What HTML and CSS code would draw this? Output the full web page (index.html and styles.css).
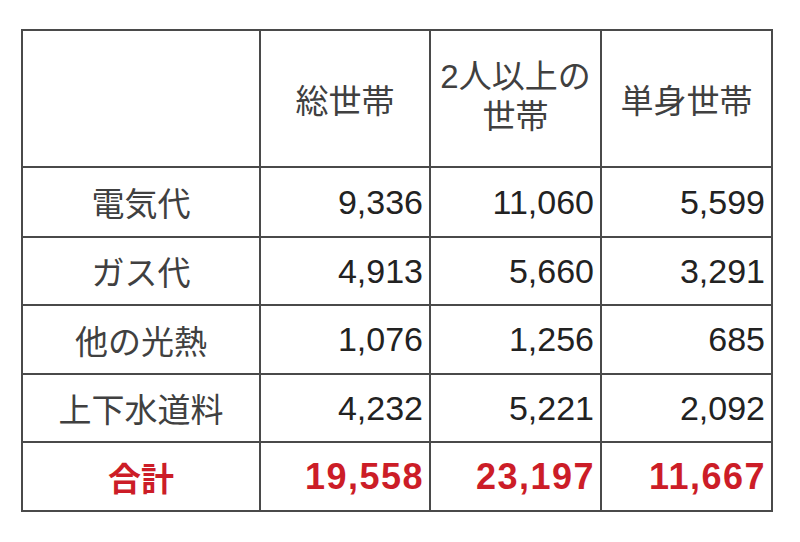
FILE: index.html
```html
<!DOCTYPE html>
<html lang="ja">
<head>
<meta charset="utf-8">
<title>光熱・水道費</title>
<link rel="stylesheet" href="styles.css">
</head>
<body>
<div class="page">
  <table class="cost">
    <thead>
      <tr class="head">
        <th class="label"></th>
        <th class="c2">総世帯</th>
        <th class="c3">2人以上の<br>世帯</th>
        <th class="c4">単身世帯</th>
      </tr>
    </thead>
    <tbody>
      <tr class="r1">
        <th class="label">電気代</th>
        <td>9,336</td>
        <td>11,060</td>
        <td>5,599</td>
      </tr>
      <tr class="r2">
        <th class="label">ガス代</th>
        <td>4,913</td>
        <td>5,660</td>
        <td>3,291</td>
      </tr>
      <tr class="r3">
        <th class="label">他の光熱</th>
        <td>1,076</td>
        <td>1,256</td>
        <td>685</td>
      </tr>
      <tr class="r4">
        <th class="label">上下水道料</th>
        <td>4,232</td>
        <td>5,221</td>
        <td>2,092</td>
      </tr>
      <tr class="total">
        <th class="label">合計</th>
        <td>19,558</td>
        <td>23,197</td>
        <td>11,667</td>
      </tr>
    </tbody>
  </table>
</div>
</body>
</html>
```
FILE: styles.css
```css
html, body {
  margin: 0;
  padding: 0;
  background: #ffffff;
}

.page {
  padding: 29px 0 0 21px;
}

.cost {
  border-collapse: collapse;
  font-family: "Liberation Sans", "Noto Sans CJK JP", sans-serif;
  color: #222222;
  table-layout: fixed;
}

.cost th,
.cost td {
  border: 2px solid #4a4a4a;
  padding: 0;
  font-weight: 400;
}

.cost th {
  font-size: 33px;
  text-align: center;
  color: #404040;
}

.cost .label { width: 236px; }
.cost .c2 { width: 168px; }
.cost .c3 { width: 169px; line-height: 40px; padding-bottom: 4px; }
.cost .c4 { width: 169px; }

.cost td {
  font-size: 34px;
  text-align: right;
  padding-right: 6px;
}

.head { height: 137px; }
.r1 { height: 70px; }
.r2 { height: 68px; }
.r3 { height: 69px; }
.r4 { height: 68px; }
.total { height: 69px; }

.total th,
.total td {
  color: #cc1d27;
  font-weight: 700;
}

.total td {
  font-size: 36px;
  letter-spacing: 1.5px;
  padding-right: 5px;
}
```
